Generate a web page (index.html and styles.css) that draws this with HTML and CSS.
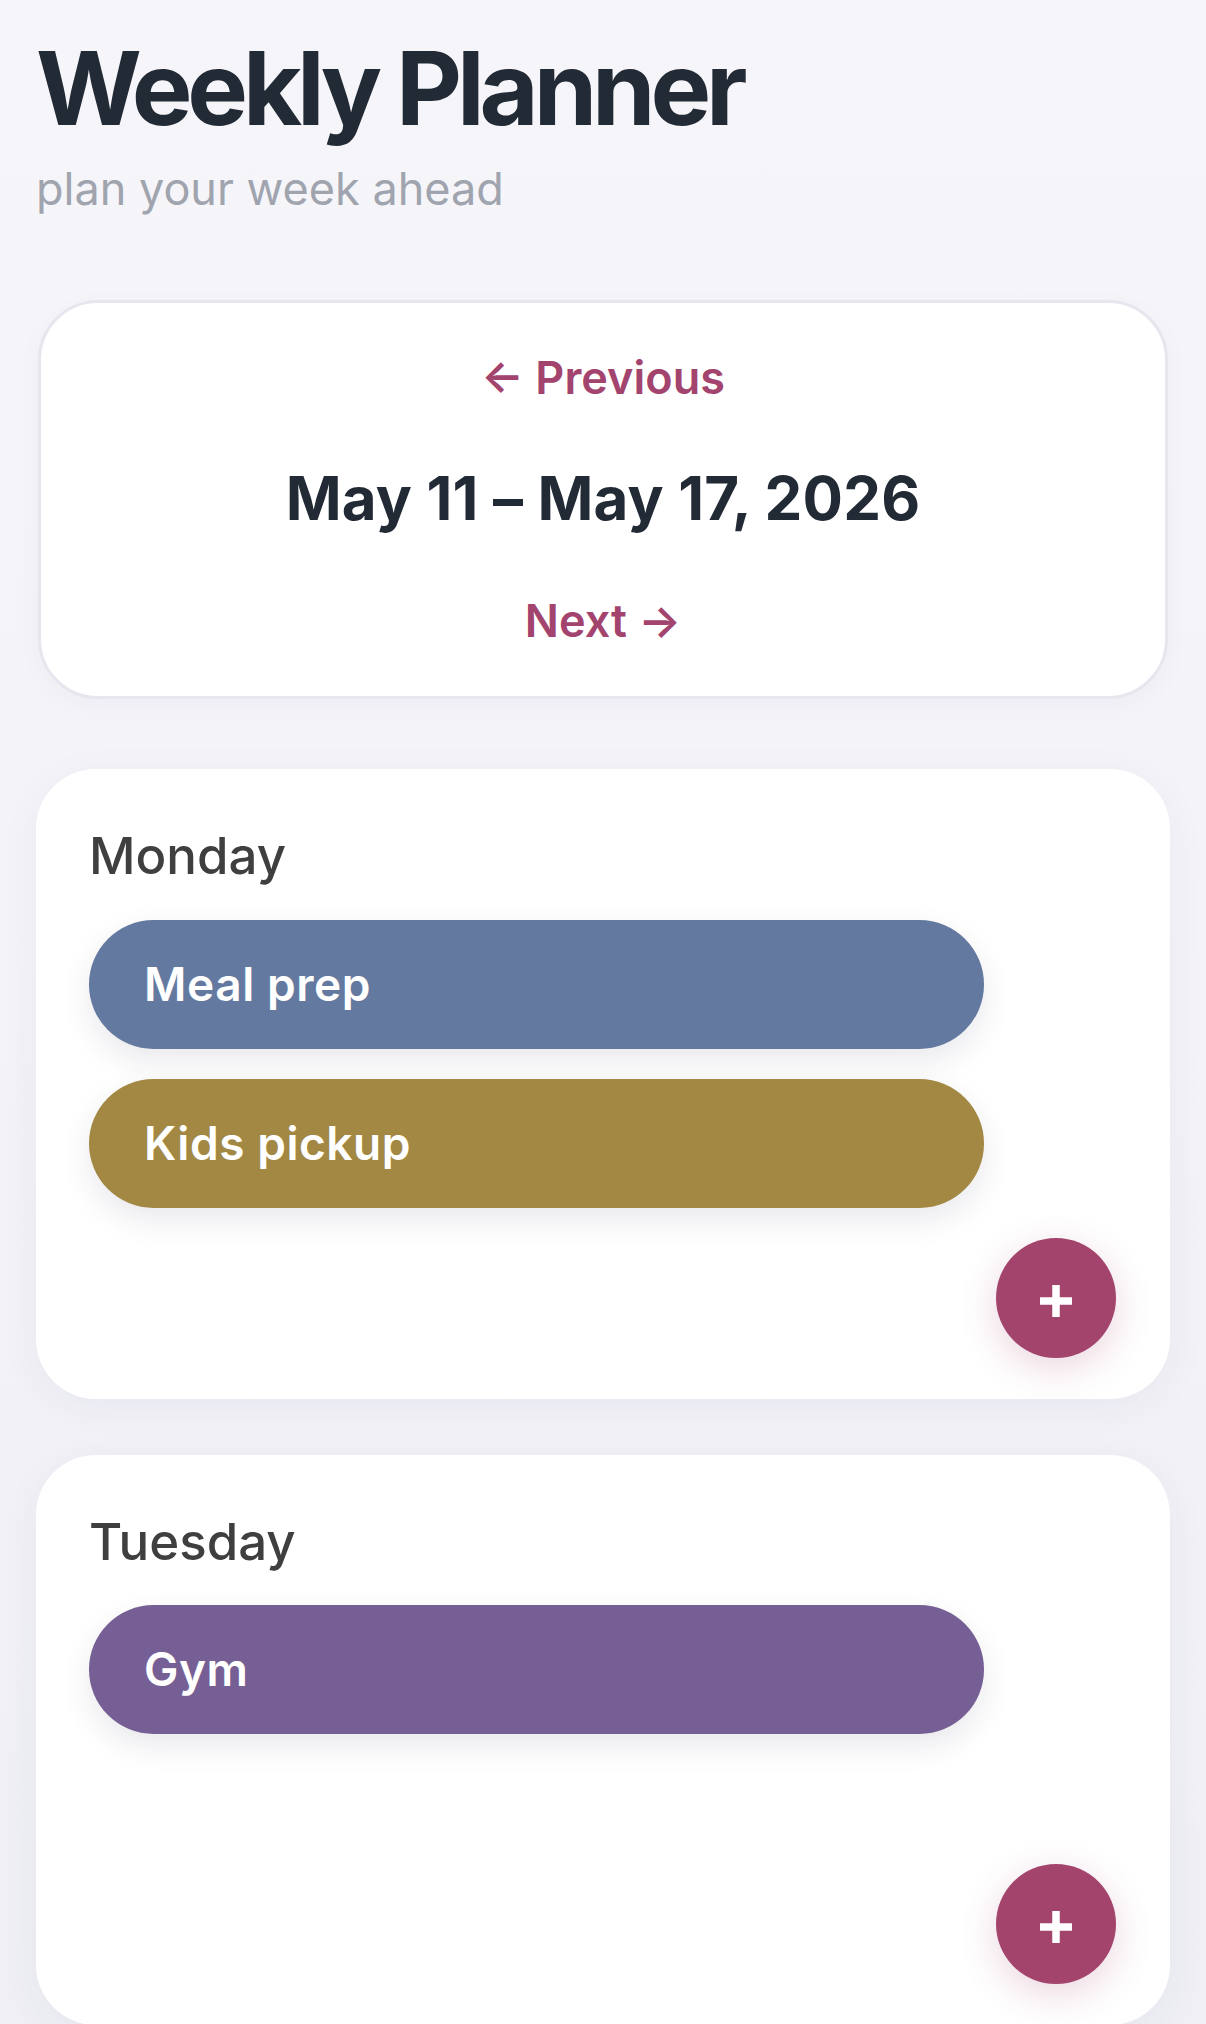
FILE: index.html
```html
<!DOCTYPE html>
<html lang="en">
<head>
    <meta charset="UTF-8">
    <meta name="viewport" content="width=device-width, initial-scale=1.0">
    <title>Weekly Planner</title>
    <link rel="stylesheet" href="styles.css">
</head>
<body>

    <div class="page">
        <!-- Header -->
        <header class="header">
            <h1>Weekly Planner</h1>
            <p class="subtitle">plan your week ahead</p>
        </header>

        <!-- Week switcher -->
        <div class="card week-nav">
            <button class="nav-link">← Previous</button>
            <h2 class="week-range">May 11 – May 17, 2026</h2>
            <button class="nav-link">Next →</button>
        </div>

        <!-- Days -->
        <section class="card day">
            <h3>Monday</h3>
            <ul class="tasks">
                <li class="task blue">Meal prep</li>
                <li class="task gold">Kids pickup</li>
            </ul>
            <button class="add" aria-label="Add task">
                <svg viewBox="0 0 36 36" width="36" height="36"><path d="M18 2v32M2 18h32" stroke="#fff" stroke-width="7.5" fill="none"/></svg>
            </button>
        </section>

        <section class="card day">
            <h3>Tuesday</h3>
            <ul class="tasks">
                <li class="task purple">Gym</li>
            </ul>
            <button class="add" aria-label="Add task">
                <svg viewBox="0 0 36 36" width="36" height="36"><path d="M18 2v32M2 18h32" stroke="#fff" stroke-width="7.5" fill="none"/></svg>
            </button>
        </section>
    </div>

</body>
</html>
```

FILE: styles.css
```css
/* Weekly planner - soft cards */
* { margin: 0; padding: 0; box-sizing: border-box; }
body { font-family: Inter, "Noto Sans", sans-serif; background: linear-gradient(#f6f6fa, #efeff5); color: #222a35; min-height: 100vh; }
button { font-family: inherit; border: none; background: none; cursor: pointer; }

.page { padding: 31px 36px 0; display: flex; flex-direction: column; }

.header h1 { font-size: 102px; line-height: 1.12; font-weight: 700; letter-spacing: -0.05em; color: #222a35; }
.subtitle { font-size: 45px; color: #a0a4ae; margin-top: 16px; }

.card { background: #fff; border-radius: 60px; }

.week-nav {
    margin: 84px 2px 0; padding: 47px 20px 48px; border: 3px solid #e7e6ef;
    display: flex; flex-direction: column; align-items: center; gap: 57px;
    box-shadow: 0 6px 24px rgba(60, 60, 110, 0.04);
}
.week-range + .nav-link { margin-top: 2px; }
.nav-link { font-size: 45px; font-weight: 600; color: #a3446e; line-height: normal; }
.week-range { font-size: 60px; font-weight: 700; letter-spacing: 0.003em; color: #222a35; line-height: normal; }

.day {
    margin-top: 56px; padding: 54px 53px 41px; min-height: 570px;
    display: flex; flex-direction: column;
    box-shadow: 0 8px 40px rgba(60, 60, 120, 0.05);
}
.week-nav + .day { margin-top: 70px; }
.day h3 { font-size: 51px; font-weight: 500; color: #3f3f3f; line-height: 1.3; }

.tasks { list-style: none; margin-top: 30px; margin-right: 133px; display: flex; flex-direction: column; gap: 30px; }
.task {
    height: 129px; border-radius: 65px; padding: 0 55px;
    display: flex; align-items: center;
    font-size: 46px; font-weight: 600; letter-spacing: 0.012em; color: #fff;
    box-shadow: 0 12px 30px rgba(40, 40, 80, 0.10);
}
.blue { background: #64799f; }
.gold { background: #a38843; }
.purple { background: #765f94; }

.add {
    width: 120px; height: 120px; border-radius: 50%; background: #a3446d;
    display: flex; align-items: center; justify-content: center;
    align-self: flex-end; margin-top: auto; margin-right: 1px;
    box-shadow: 0 10px 36px rgba(163, 68, 109, 0.22);
}
.tasks + .add { margin-top: 30px; }
.day:last-child .add { margin-top: auto; }
.add svg { margin-top: 6px; }
```
